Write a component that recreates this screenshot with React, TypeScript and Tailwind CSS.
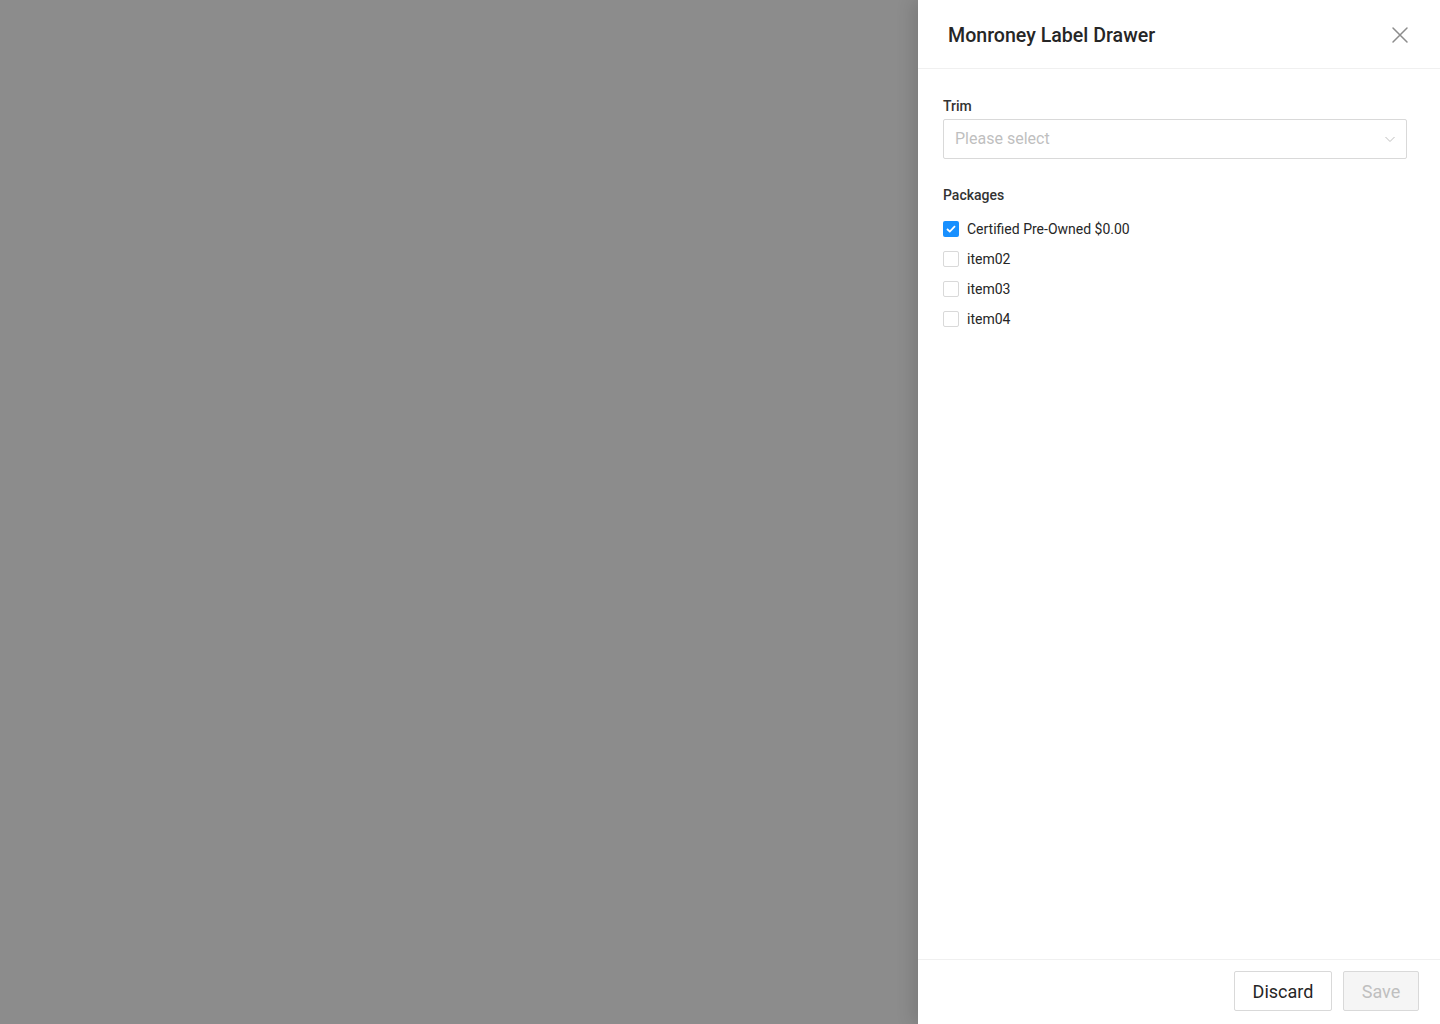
import React from "react";

export default function App() {
  const items = [
    { label: "Certified Pre-Owned $0.00", checked: true },
    { label: "item02", checked: false },
    { label: "item03", checked: false },
    { label: "item04", checked: false },
  ];
  return (
    <div className="w-[1440px] h-[1024px] flex bg-[#8c8c8c] overflow-hidden" style={{ fontFamily: "Roboto, 'Liberation Sans', sans-serif" }}>
      <div className="flex-1" />
      <div className="w-[522px] h-full bg-white flex flex-col shadow-[-6px_0_16px_rgba(0,0,0,0.12)]">
        <div className="h-[69px] border-b border-[#f0f0f0] flex items-center justify-between pl-[30px] pr-[31px] pt-[4px] shrink-0">
          <div className="text-[19.6px] font-medium text-[#262626]">Monroney Label Drawer</div>
          <svg width="18" height="18" viewBox="0 0 18 18" className="text-[#8c8c8c] -mt-[2px]">
            <path d="M2 2L16 16M16 2L2 16" stroke="currentColor" strokeWidth="1.5" strokeLinecap="round" />
          </svg>
        </div>
        <div className="flex-1 pl-[25px] pt-[27px]">
          <div className="text-[14px] font-medium text-[#333] leading-[20px] mb-[3px]">Trim</div>
          <div className="w-[464px] h-[40px] border border-[#d9d9d9] rounded-[2px] flex items-center justify-between pl-[11px] pr-[12px]">
            <span className="text-[16px] text-[#bfbfbf]">Please select</span>
            <svg width="12" height="12" viewBox="0 0 12 12" className="mr-[-2px]">
              <path d="M1.5 4L6 8.5L10.5 4" fill="none" stroke="#bfbfbf" strokeWidth="1" />
            </svg>
          </div>
          <div className="text-[14px] font-medium text-[#333] leading-[20px] mt-[26px]">Packages</div>
          <div className="flex flex-col gap-[10px] mt-[14px]">
            {items.map((it) => (
              <div key={it.label} className="flex items-center h-[20px] gap-[8px]">
                {it.checked ? (
                  <div className="w-[16px] h-[16px] rounded-[2px] bg-[#1890ff] flex items-center justify-center">
                    <svg width="10" height="8" viewBox="0 0 10 8">
                      <path d="M1 4L3.8 6.6L9 1.2" fill="none" stroke="white" strokeWidth="1.8" />
                    </svg>
                  </div>
                ) : (
                  <div className="w-[16px] h-[16px] rounded-[2px] border border-[#d9d9d9] bg-white" />
                )}
                <span className="text-[14px] text-[#262626]">{it.label}</span>
              </div>
            ))}
          </div>
        </div>
        <div className="h-[65px] border-t border-[#f0f0f0] flex items-start justify-end gap-[11px] pr-[21px] pt-[11px] shrink-0">
          <button className="w-[98px] h-[40px] border border-[#d9d9d9] rounded-[2px] bg-white text-[18px] text-[#262626]">Discard</button>
          <button className="w-[76px] h-[40px] border border-[#d9d9d9] rounded-[2px] bg-[#f5f5f5] text-[18px] text-[#bfbfbf]">Save</button>
        </div>
      </div>
    </div>
  );
}
